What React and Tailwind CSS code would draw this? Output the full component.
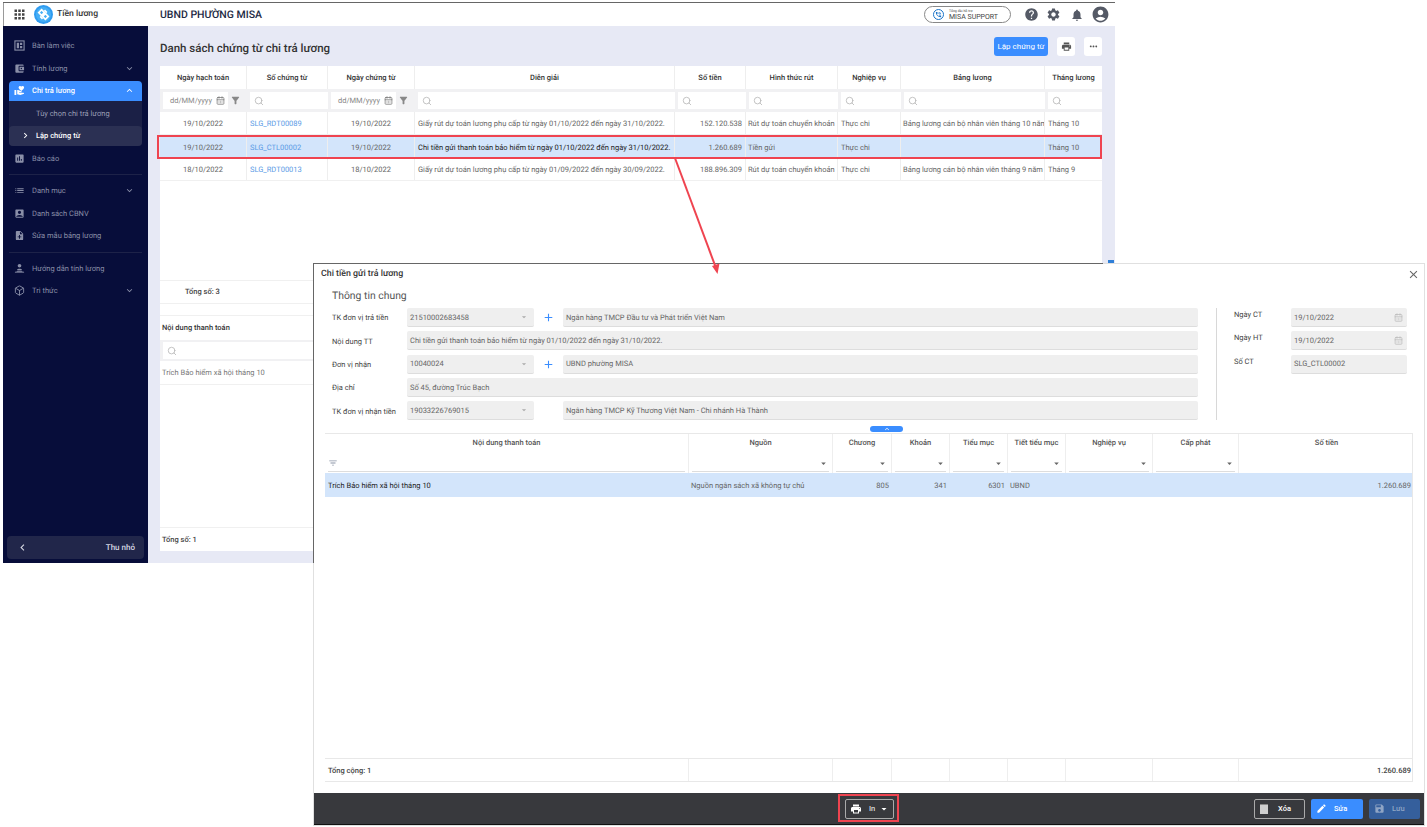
import React from "react";
import {
    MdApps,
    MdHelp,
    MdSettings,
    MdNotifications,
    MdAccountCircle,
    MdPrint,
    MdMoreHoriz,
    MdFilterAlt,
    MdExpandMore,
    MdExpandLess,
    MdChevronRight,
    MdChevronLeft,
    MdAssessment,
    MdList,
    MdAccountBox,
    MdNoteAdd,
    MdAccountBalanceWallet,
    MdEdit,
    MdSave,
    MdArrowDropDown,
    MdAdd,
    MdClose,
    MdFilterList,
    MdPhoneInTalk,
    MdVolunteerActivism,
} from "react-icons/md";
import { Search, CalendarDays, Box } from "lucide-react";

const listCols = "grid grid-cols-[87px_81px_87px_260px_71px_92px_63px_144px_57px]";
const dialogCols = "grid grid-cols-[364px_144px_59px_58px_58px_58px_87px_86px_175px]";
const rowCell = "h-full flex items-center pt-[2px] border-r border-[#eeeeee]";

const columns = [
    "Ngày hạch toán",
    "Số chứng từ",
    "Ngày chứng từ",
    "Diễn giải",
    "Số tiền",
    "Hình thức rút",
    "Nghiệp vụ",
    "Bảng lương",
    "Tháng lương",
];

const vouchers = [
    {
        id: 1,
        entryDate: "19/10/2022",
        code: "SLG_RDT00089",
        date: "19/10/2022",
        note: "Giấy rút dự toán lương phụ cấp từ ngày 01/10/2022 đến ngày 31/10/2022.",
        amount: "152.120.538",
        method: "Rút dự toán chuyển khoản",
        type: "Thực chi",
        payroll: "Bảng lương cán bộ nhân viên tháng 10 năm 2022",
        month: "Tháng 10",
    },
    {
        id: 2,
        entryDate: "19/10/2022",
        code: "SLG_CTL00002",
        date: "19/10/2022",
        note: "Chi tiền gửi thanh toán bảo hiểm từ ngày 01/10/2022 đến ngày 31/10/2022.",
        amount: "1.260.689",
        method: "Tiền gửi",
        type: "Thực chi",
        payroll: "",
        month: "Tháng 10",
        selected: true,
    },
    {
        id: 3,
        entryDate: "18/10/2022",
        code: "SLG_RDT00013",
        date: "18/10/2022",
        note: "Giấy rút dự toán lương phụ cấp từ ngày 01/09/2022 đến ngày 30/09/2022.",
        amount: "188.896.309",
        method: "Rút dự toán chuyển khoản",
        type: "Thực chi",
        payroll: "Bảng lương cán bộ nhân viên tháng 9 năm 2022",
        month: "Tháng 9",
    },
];

const Logo = () => (
    <svg width="19" height="19" viewBox="0 0 20 20">
        <circle cx="10" cy="10" r="10" fill="#2f9bf0" />
        <circle cx="10" cy="10" r="8" fill="#45aef5" />
        <path
            d="M5 8l3-3 3 3-3 3zM9 12l3-3 3 3-3 3z"
            fill="none"
            stroke="#fff"
            strokeWidth="1.8"
        />
        <path d="M11 5.500l2.500 2.500M9 14.500L6.500 12" stroke="#fff" strokeWidth="1.8" />
    </svg>
);

// icons the packages don't have in this shape
const DeskIcon = ({ className }) => (
    <svg className={className} viewBox="0 0 12 12" fill="none" stroke="currentColor">
        <rect x="1" y="1" width="10" height="10" strokeWidth="1.2" />
        <path d="M3 3h2.500v6H3zM6.500 3H9v2.500H6.500zM6.500 6.500H9V9H6.500z" fill="currentColor" stroke="none" />
    </svg>
);

const GuideIcon = ({ className }) => (
    <svg className={className} viewBox="0 0 12 12" fill="currentColor">
        <circle cx="6" cy="3" r="2" />
        <path d="M3.200 7c.8-1 4.800-1 5.600 0l-1 1H4.200z" />
        <path d="M1 9.500h10v1H1z" />
        <path d="M3.500 8.500l-1 1h7l-1-1z" />
    </svg>
);

const NavItem = ({ icon: Icon, label, chevron, active }) => (
    <div
        className={`flex items-center h-[20px] my-[1.25px] ml-[6px] mr-[6px] pl-[5px] pr-[7px] rounded-[4px] ${
            active ? "bg-[#3a8dff] rounded-b-none text-white font-medium" : "text-[#8a8fa8]"
        }`}
    >
        <Icon className="w-[11px] h-[11px] shrink-0" />
        <span className="ml-[7px] flex-1 text-[7.5px] leading-none">{label}</span>
        {chevron === "down" && <MdExpandMore className="w-[11px] h-[11px]" />}
        {chevron === "up" && <MdExpandLess className="w-[11px] h-[11px]" />}
    </div>
);

const Sidebar = () => (
    <div className="w-[145px] shrink-0 bg-[#070d3a] flex flex-col pt-[8.5px] pb-[4px]">
        <NavItem icon={DeskIcon} label="Bàn làm việc" />
        <NavItem icon={MdAccountBalanceWallet} label="Tính lương" chevron="down" />
        <NavItem icon={MdVolunteerActivism} label="Chi trả lương" chevron="up" active />
        <div className="mx-[6px] mt-[-1.25px] bg-[#1b2046] rounded-b-[4px] text-[7.5px]">
            <div className="h-[25px] flex items-center pl-[27px] text-[#9a9eb4]">
                Tùy chọn chi trả lương
            </div>
            <div className="h-[20px] flex items-center bg-[#2b3053] rounded-[4px] text-white font-medium">
                <MdChevronRight className="w-[11px] h-[11px] ml-[11px] mr-[5px]" />
                Lập chứng từ
            </div>
        </div>
        <div className="h-[1.25px]" />
        <NavItem icon={MdAssessment} label="Báo cáo" />
        <div className="h-px bg-[#1d2248] mx-[6px] my-[4.5px]" />
        <NavItem icon={MdList} label="Danh mục" chevron="down" />
        <NavItem icon={MdAccountBox} label="Danh sách CBNV" />
        <NavItem icon={MdNoteAdd} label="Sửa mẫu bảng lương" />
        <div className="h-px bg-[#1d2248] mx-[6px] my-[4.5px]" />
        <NavItem icon={GuideIcon} label="Hướng dẫn tính lương" />
        <NavItem icon={Box} label="Tri thức" chevron="down" />
        <div className="mt-auto mx-[4px] h-[23px] rounded-[4px] bg-[#21264a] flex items-center justify-between pl-[9px] pr-[9px] text-[8px] text-[#d5d7e2] font-medium">
            <MdChevronLeft className="w-[13px] h-[13px]" />
            Thu nhỏ
        </div>
    </div>
);

const TopBar = () => (
    <div className="h-[23px] flex items-center border-l border-[#9a9a9a] bg-white">
        <div className="w-[156px] shrink-0 flex items-center">
            <MdApps className="w-[15px] h-[15px] ml-[8px] text-[#444]" />
            <div className="ml-[7px]">
                <Logo />
            </div>
            <span className="ml-[4px] text-[8.6px] font-medium text-[#333]">Tiền lương</span>
        </div>
        <span className="text-[10.5px] font-medium text-[#1d2a44]">UBND PHƯỜNG MISA</span>
        <div className="ml-auto mr-[5px] flex items-center text-[#555a66]">
            <div className="w-[87px] h-[17px] rounded-full border border-[#888] flex items-center pl-[8px] mr-[13px]">
                <div className="w-[11px] h-[11px] rounded-full border-[1.5px] border-[#1a73c8] flex items-center justify-center">
                    <MdPhoneInTalk className="w-[7px] h-[7px] text-[#1a73c8]" />
                </div>
                <div className="ml-[5px] flex flex-col leading-none text-[#444]">
                    <span className="text-[3.5px] leading-[5px]">Tổng đài hỗ trợ</span>
                    <span className="text-[7px] leading-[7px]">MISA SUPPORT</span>
                </div>
            </div>
            <MdHelp className="w-[15px] h-[15px]" />
            <MdSettings className="w-[15px] h-[15px] ml-[7px]" />
            <MdNotifications className="w-[14px] h-[14px] ml-[9px]" />
            <MdAccountCircle className="w-[19px] h-[19px] ml-[7px]" />
        </div>
    </div>
);

const SearchBox = ({ className = "" }) => (
    <div className={`h-[17px] bg-white flex items-center pl-[4px] ${className}`}>
        <Search className="w-[10px] h-[10px] text-[#b8b8b8]" />
    </div>
);

const DateBox = () => (
    <div className="flex items-center h-full pl-[3px]">
        <div className="w-[65px] h-[17px] bg-white flex items-center justify-between pl-[7px] pr-[3px] text-[7.5px] text-[#888]">
            dd/MM/yyyy
            <CalendarDays className="w-[9px] h-[9px] text-[#777]" />
        </div>
        <MdFilterAlt className="w-[11px] h-[11px] ml-[2px] text-[#888]" />
    </div>
);

const VoucherTable = () => (
    <div className="h-[214px] flex flex-col">
        <div className={`${listCols} h-[23px] text-[7.5px] font-medium text-[#333]`}>
            {columns.map((col) => (
                <div key={col} className="flex items-center justify-center border-r border-[#eeeeee] last:border-r-0">
                    {col}
                </div>
            ))}
        </div>
        <div className={`${listCols} h-[23px] bg-[#f1f1f3] items-center`}>
            <DateBox />
            <SearchBox className="ml-[3px]" />
            <DateBox />
            <SearchBox className="ml-[3px]" />
            <SearchBox className="ml-[3px]" />
            <SearchBox className="ml-[3px]" />
            <SearchBox className="ml-[3px]" />
            <SearchBox className="ml-[3px]" />
            <SearchBox className="ml-[3px]" />
        </div>
        {vouchers.map((row) => (
            <div
                key={row.id}
                className={`${listCols} h-[23px] items-center text-[7.5px] ${
                    row.selected ? "bg-[#d3e5fb]" : "bg-white border-b border-[#f0f0f0]"
                } text-[#666]`}
            >
                <div className={`${rowCell} justify-center`}>{row.entryDate}</div>
                <div className={`${rowCell} pl-[3px] text-[#5a9be6]`}>{row.code}</div>
                <div className={`${rowCell} justify-center`}>{row.date}</div>
                <div className={`${rowCell} pl-[3px] whitespace-nowrap overflow-hidden ${row.selected ? "text-[#222]" : ""}`}>
                    {row.note}
                </div>
                <div className={`${rowCell} justify-end pr-[3px]`}>{row.amount}</div>
                <div className={`${rowCell} pl-[2px] whitespace-nowrap overflow-hidden`}>{row.method}</div>
                <div className={`${rowCell} pl-[3px]`}>{row.type}</div>
                <div className={`${rowCell} pl-[2px] whitespace-nowrap overflow-hidden`}>{row.payroll}</div>
                <div className="h-full flex items-center pt-[2px] pl-[3px]">{row.month}</div>
            </div>
        ))}
    </div>
);

const MainWindow = () => (
    <div className="absolute left-[3px] top-[2px] w-[1112px] h-[561px] border-t border-[#666] flex flex-col">
        <TopBar />
        <div className="flex-1 flex min-h-0">
            <Sidebar />
            <div className="flex-1 bg-[#e7e9f5] flex flex-col pl-[12px] pr-[13px] pb-[12px]">
                <div className="h-[40px] shrink-0 flex items-center">
                    <h1 className="text-[11.5px] font-medium text-[#333] mt-[5px]">Danh sách chứng từ chi trả lương</h1>
                    <button className="ml-auto w-[54px] h-[19px] mt-[1px] rounded-[3px] bg-[#3a8dff] text-white text-[8px]">
                        Lập chứng từ
                    </button>
                    <button className="ml-[9px] w-[18px] h-[19px] mt-[1px] rounded-[3px] bg-white flex items-center justify-center text-[#555]">
                        <MdPrint className="w-[11px] h-[11px]" />
                    </button>
                    <button className="ml-[9px] w-[18px] h-[19px] mt-[1px] rounded-[3px] bg-white flex items-center justify-center text-[#555]">
                        <MdMoreHoriz className="w-[11px] h-[11px]" />
                    </button>
                </div>
                <div className="flex-1 bg-white flex flex-col">
                    <VoucherTable />
                    <div className="h-[24px] border-t border-b border-[#f0f0f0] flex items-center pl-[25px] text-[7.5px] font-medium text-[#444]">
                        Tổng số: 3
                    </div>
                    <div className="h-[12px] border-b border-[#f0f0f0]" />
                    <div className="h-[24px] flex items-center pl-[2px] text-[7.5px] font-medium text-[#333]">
                        Nội dung thanh toán
                    </div>
                    <div className="h-[21px] bg-[#f1f1f3] flex items-center pl-[3px]">
                        <SearchBox className="w-[150px]" />
                    </div>
                    <div className="h-[24px] border-b border-[#f0f0f0] flex items-center pt-[1px] pl-[2px] text-[7.5px] text-[#777]">
                        Trích Bảo hiểm xã hội tháng 10
                    </div>
                    <div className="flex-1" />
                    <div className="h-[24px] border-t border-[#f0f0f0] flex items-center pl-[2px] text-[7.5px] font-medium text-[#444]">
                        Tổng số: 1
                    </div>
                </div>
            </div>
        </div>
    </div>
);

const FormInput = ({ value, className = "", children }) => (
    <div
        className={`h-[19px] bg-[#efefef] rounded-[2px] border-b border-[#dddddd] flex items-center pl-[3px] pr-[3px] text-[7.5px] text-[#666] whitespace-nowrap ${className}`}
    >
        <span className="flex-1 pt-[1px]">{value}</span>
        {children}
    </div>
);

const SelectInput = ({ value }) => (
    <FormInput value={value} className="w-[127px] shrink-0">
        <MdArrowDropDown className="w-[10px] h-[10px] text-[#aaa] mr-[2px]" />
    </FormInput>
);

const FormRow = ({ label, children }) => (
    <div className="flex items-center">
        <span className="w-[75px] shrink-0 pt-[1px] text-[7.5px] text-[#444]">{label}</span>
        {children}
    </div>
);

const PlusSlot = ({ empty }) => (
    <div className="w-[29px] shrink-0 flex items-center justify-center text-[#3a8dff]">
        {!empty && <MdAdd className="w-[13px] h-[13px]" />}
    </div>
);

const DateField = ({ label, value }) => (
    <div className="flex">
        <span className="w-[57px] shrink-0 text-[7.5px] text-[#444] leading-none pt-[3px]">{label}</span>
        <FormInput value={value} className="flex-1">
            <CalendarDays className="w-[9px] h-[9px] text-[#bbb] mr-[1px]" />
        </FormInput>
    </div>
);

const GeneralInfo = () => (
    <div className="flex pl-[18px] pr-[17px]">
        <div className="w-[866px] shrink-0 flex flex-col gap-[4.3px]">
            <FormRow label="TK đơn vị trả tiền">
                <SelectInput value="21510002683458" />
                <PlusSlot />
                <FormInput value="Ngân hàng TMCP Đầu tư và Phát triển Việt Nam" className="flex-1" />
            </FormRow>
            <FormRow label="Nội dung TT">
                <FormInput value="Chi tiền gửi thanh toán bảo hiểm từ ngày 01/10/2022 đến ngày 31/10/2022." className="flex-1" />
            </FormRow>
            <FormRow label="Đơn vị nhận">
                <SelectInput value="10040024" />
                <PlusSlot />
                <FormInput value="UBND phường MISA" className="flex-1" />
            </FormRow>
            <FormRow label="Địa chỉ">
                <FormInput value="Số 45, đường Trúc Bạch" className="flex-1" />
            </FormRow>
            <FormRow label="TK đơn vị nhận tiền">
                <SelectInput value="19033226769015" />
                <PlusSlot empty />
                <FormInput value="Ngân hàng TMCP Kỹ Thương Việt Nam - Chi nhánh Hà Thành" className="flex-1" />
            </FormRow>
        </div>
        <div className="w-px bg-[#d8d8d8] ml-[18px] mr-[17px]" />
        <div className="flex-1 flex flex-col gap-[4.3px]">
            <DateField label="Ngày CT" value="19/10/2022" />
            <DateField label="Ngày HT" value="19/10/2022" />
            <div className="flex">
                <span className="w-[57px] shrink-0 text-[7.5px] text-[#444] leading-none pt-[3px]">Số CT</span>
                <FormInput value="SLG_CTL00002" className="flex-1" />
            </div>
        </div>
    </div>
);

const detailCols = ["Nội dung thanh toán", "Nguồn", "Chương", "Khoản", "Tiểu mục", "Tiết tiểu mục", "Nghiệp vụ", "Cấp phát", "Số tiền"];

const DetailFilter = ({ first }) => (
    <div className="border-r border-[#eeeeee] px-[3px] pb-[1px] flex items-end h-full">
        <div className="flex-1 h-[17px] border-b border-[#dddddd] flex items-center justify-between">
            {first ? <MdFilterList className="w-[10px] h-[10px] text-[#8a94a6]" /> : <span />}
            {!first && <MdArrowDropDown className="w-[11px] h-[11px] text-[#666]" />}
        </div>
    </div>
);

const DetailTable = () => (
    <div className="relative mx-[11px] mt-[13px] flex-1 flex flex-col border-t border-b border-[#e8e8e8] border-r text-[7.5px]">
        <div className="absolute left-[545px] top-[-8px] w-[33px] h-[6px] rounded-full bg-[#3a8dff] flex items-center justify-center text-white">
            <MdExpandLess className="w-[8px] h-[8px]" />
        </div>
        <div className={`${dialogCols} h-[17px] font-medium text-[#555]`}>
            {detailCols.map((col) => (
                <div key={col} className="flex items-center justify-center border-r border-[#eeeeee] last:border-r-0">
                    {col}
                </div>
            ))}
        </div>
        <div className={`${dialogCols} h-[22px]`}>
            <DetailFilter first />
            <DetailFilter />
            <DetailFilter />
            <DetailFilter />
            <DetailFilter />
            <DetailFilter />
            <DetailFilter />
            <DetailFilter />
            <div />
        </div>
        <div className={`${dialogCols} h-[24px] bg-[#d3e5fb] items-center text-[#666]`}>
            <div className="pl-[3px] text-[#222]">Trích Bảo hiểm xã hội tháng 10</div>
            <div className="pl-[2px] whitespace-nowrap">Nguồn ngân sách xã không tự chủ</div>
            <div className="text-right pr-[3px]">805</div>
            <div className="text-right pr-[3px]">341</div>
            <div className="text-right pr-[3px]">6301</div>
            <div className="pl-[2px]">UBND</div>
            <div />
            <div />
            <div className="text-right pr-[3px]">1.260.689</div>
        </div>
        <div className="flex-1" />
        <div className={`${dialogCols} h-[23px] border-t border-[#e8e8e8] items-center text-[#444] font-medium`}>
            <div className={`${rowCell} pl-[3px]`}>Tổng cộng: 1</div>
            <div className="h-full border-r border-[#eeeeee]" />
            <div className="h-full border-r border-[#eeeeee]" />
            <div className="h-full border-r border-[#eeeeee]" />
            <div className="h-full border-r border-[#eeeeee]" />
            <div className="h-full border-r border-[#eeeeee]" />
            <div className="h-full border-r border-[#eeeeee]" />
            <div className="h-full border-r border-[#eeeeee]" />
            <div className="text-right pr-[3px] pt-[2px]">1.260.689</div>
        </div>
    </div>
);

const DialogFooter = () => (
    <div className="h-[32px] mt-[11px] shrink-0 bg-[#38393d] border-b border-[#111] flex items-center relative text-[7.5px]">
        <button className="absolute left-[531px] top-[6px] w-[49px] h-[20px] rounded-[2px] border border-[#aaa] flex items-center text-white pl-[4px]">
            <MdPrint className="w-[12px] h-[12px]" />
            <span className="ml-[7px]">In</span>
            <MdArrowDropDown className="w-[12px] h-[12px] ml-[3px]" />
        </button>
        <div className="ml-auto mr-[4px] flex gap-[6px]">
            <button className="w-[51px] h-[20px] rounded-[2px] border border-[#aaa] flex items-center text-white font-medium pl-[5px]">
                <span className="w-[8px] h-[10px] bg-[#cfcfcf] border-t border-[#888]" />
                <span className="ml-[10px]">Xóa</span>
            </button>
            <button className="w-[52px] h-[20px] rounded-[2px] bg-[#3a8dff] flex items-center text-white font-medium pl-[5px]">
                <MdEdit className="w-[11px] h-[11px]" />
                <span className="ml-[7px]">Sửa</span>
            </button>
            <button className="w-[51px] h-[20px] rounded-[2px] bg-[#355f9c] flex items-center text-[#8fa5c5] font-medium pl-[5px]">
                <MdSave className="w-[11px] h-[11px]" />
                <span className="ml-[7px]">Lưu</span>
            </button>
        </div>
    </div>
);

const DetailDialog = () => (
    <div className="absolute left-[313px] top-[263px] w-[1112px] h-[563px] bg-white border border-[#e0e0e0] flex flex-col">
        <div className="h-[20px] shrink-0 flex items-center justify-between pl-[7px] pr-[4px]">
            <span className="text-[8.8px] pt-[2px] font-medium text-[#333]">Chi tiền gửi trả lương</span>
            <MdClose className="w-[13px] h-[13px] text-[#666]" />
        </div>
        <div className="h-[24px] shrink-0 flex items-center pl-[18px] text-[10.4px] text-[#555]">Thông tin chung</div>
        <GeneralInfo />
        <DetailTable />
        <DialogFooter />
    </div>
);

export default function App() {
    return (
        <div className="relative w-[1427px] h-[827px] bg-white overflow-hidden [font-family:Roboto,sans-serif] [text-rendering:geometricPrecision]">
            <MainWindow />
            <div className="absolute left-[1108px] top-[260px] w-[6px] h-[3px] bg-[#2f7fd8]" />
            <DetailDialog />
            <div className="absolute left-[313px] top-[263px] w-[790px] h-px bg-[#666]" />
            <div className="absolute left-[313px] top-[263px] w-px h-[300px] bg-[#666]" />
            <div className="absolute left-[157px] top-[135px] w-[945px] h-[24px] border-2 border-[#ef4450]" />
            <div className="absolute left-[838px] top-[794px] w-[61px] h-[28px] border-2 border-[#ef4450]" />
            <svg className="absolute left-0 top-0 pointer-events-none" width="1427" height="827">
                <line x1="675" y1="158" x2="716" y2="268" stroke="#ef4450" strokeWidth="2" />
                <path d="M717.5 274 L712 266 L719.5 263.5 Z" fill="#ef4450" />
            </svg>
        </div>
    );
}
